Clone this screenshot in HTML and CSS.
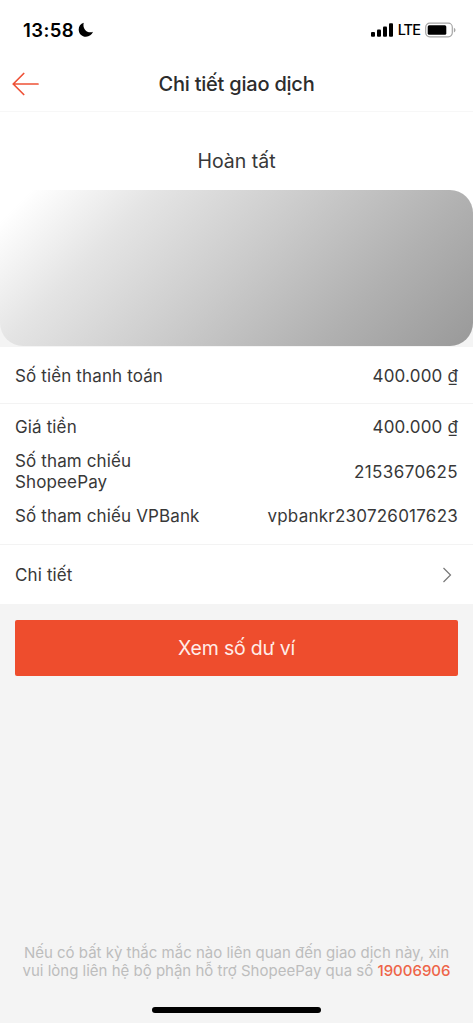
FILE: index.html
```html
<!DOCTYPE html>
<html lang="vi">
<head>
<meta charset="utf-8">
<meta name="viewport" content="width=device-width, initial-scale=1">
<title>Chi tiết giao dịch</title>
<link rel="stylesheet" href="styles.css">
</head>
<body>
<div class="screen">
  <div class="status-bar">
    <div class="status-left">
      <span class="clock">13:58</span>
      <svg class="moon" width="16" height="16" viewBox="0 0 16 16"><path d="M5.700 .7C2.500 1.700 .7 4.300 .7 7.400c0 4.200 3.200 7.300 7.300 7.300 3.200 0 6-1.900 7-4.900-4.600 2.100-11-2-9.300-9.100z"/></svg>
    </div>
    <div class="status-right">
      <svg width="22" height="14" viewBox="0 0 22 14"><rect x="0" y="9" width="4" height="4.700" rx="1"/><rect x="6" y="6.500" width="4" height="7.200" rx="1"/><rect x="12" y="3.500" width="4" height="10.200" rx="1"/><rect x="18" y=".3" width="4" height="13.400" rx="1"/></svg>
      <span class="network">LTE</span>
      <svg class="battery" width="31" height="16" viewBox="0 0 31 16"><rect x=".7" y="1.200" width="26.600" height="13.600" rx="4" fill="none" stroke="#a6a6a6" stroke-width="1.200"/><rect x="2.700" y="3.300" width="18.600" height="9.400" rx="1.500"/><path d="M28.900 5.700c2.100 1 2.100 3.800 0 4.800z" fill="#a6a6a6"/></svg>
    </div>
  </div>
  <header class="nav-bar">
    <svg class="back" width="28" height="24" viewBox="0 0 28 24"><path d="M26 12H1.200M11.700 1.500L1.200 12l10.500 10.500"/></svg>
    <h1 class="title">Chi tiết giao dịch</h1>
  </header>
  <div class="status-text"><span>Hoàn tất</span></div>
  <div class="banner"><div class="banner-fill"></div></div>
  <section class="details">
    <div class="row total"><span>Số tiền thanh toán</span><span class="amount">400.000 ₫</span></div>
    <div class="group">
      <div class="row"><span>Giá tiền</span><span class="amount">400.000 ₫</span></div>
      <div class="row"><span>Số tham chiếu<br>ShopeePay</span><span class="number">2153670625</span></div>
      <div class="row"><span>Số tham chiếu VPBank</span><span class="code">vpbankr230726017623</span></div>
    </div>
    <div class="row more"><span>Chi tiết</span><svg class="chevron" width="10" height="16" viewBox="0 0 10 16"><path d="M1.500 1l7 7-7 7"/></svg></div>
  </section>
  <button class="primary">Xem số dư ví</button>
  <footer class="help">
    <p>Nếu có bất kỳ thắc mắc nào liên quan đến giao dịch này, xin<br>vui lòng liên hệ bộ phận hỗ trợ ShopeePay qua số <span class="phone">19006906</span></p>
  </footer>
  <div class="home-indicator"></div>
</div>
</body>
</html>
```

FILE: styles.css
```css
* { box-sizing: border-box; }
body { margin: 0; background: #fff; font-family: Inter, "Noto Sans", sans-serif; color: #383838; }
.screen { width: 473px; height: 1023px; display: flex; flex-direction: column; background: #f4f4f4; }
.status-bar { height: 58px; flex: none; display: flex; justify-content: space-between; align-items: center; padding: 1px 17px 0 23px; background: #fff; color: #000; }
.status-left, .status-right { display: flex; align-items: center; }
.clock { font-size: 18.5px; font-weight: 600; letter-spacing: 0.4px; }
.moon { margin-left: 4px; }
.network { margin-left: 5px; font-size: 14.5px; font-weight: 500; letter-spacing: -0.9px; }
.battery { margin-left: 5px; }
.nav-bar { height: 54px; flex: none; display: flex; align-items: center; padding: 0 0 1px 12px; background: #fff; border-bottom: 1px solid #f7f7f7; }
.back { fill: none; stroke: #ee5136; stroke-width: 1.7; stroke-linecap: round; stroke-linejoin: round; }
.title { flex: 1; margin: 0 40px 0 0; text-align: center; font-size: 20px; line-height: 28px; font-weight: 500; letter-spacing: -0.22px; color: #2c2c2c; }
.status-text { height: 78px; flex: none; display: flex; justify-content: center; padding-top: 35px; background: #fff; font-size: 19.5px; line-height: 28px; }
.banner { height: 157px; flex: none; background: linear-gradient(#fff 50%, #f4f4f4 50%); }
.banner-fill { height: 156px; border-radius: 23px; background: linear-gradient(135deg, #fff 5%, #e4e4e4 25%, #cbcbcb 50%, #b1b1b1 75%, #999 100%); }
.details { height: 257px; flex: none; background: #fff; font-size: 17px; line-height: 21px; letter-spacing: 0.13px; }
.row { display: flex; align-items: center; justify-content: space-between; padding: 0 15px; }
.total { height: 57px; padding-top: 2px; border-bottom: 1px solid #f3f3f3; }
.group { height: 141px; padding-top: 13px; display: flex; flex-direction: column; gap: 13px; border-bottom: 1px solid #f3f3f3; }
.amount { letter-spacing: 0.18px; }
.number { letter-spacing: 0.4px; }
.code { letter-spacing: 0.24px; }
.more { height: 59px; padding-top: 2px; padding-right: 21px; }
.chevron { margin-bottom: 1px; fill: none; stroke: #777; stroke-width: 1.2; }
.primary { height: 56px; flex: none; margin: 16px 15px 0; padding: 0; border: 0; border-radius: 2px; background: #ee4d2d; color: #ffece8; font-family: inherit; font-size: 19.5px; letter-spacing: -0.2px; }
.help { margin-top: auto; padding-bottom: 27px; text-align: center; font-size: 15px; line-height: 18px; color: #bdbdbd; }
.help p { margin: 0; white-space: nowrap; }
.phone { color: #ee6448; font-weight: 500; }
.home-indicator { width: 169px; height: 6px; flex: none; margin: 0 auto 10px; border-radius: 3px; background: #000; }
```
